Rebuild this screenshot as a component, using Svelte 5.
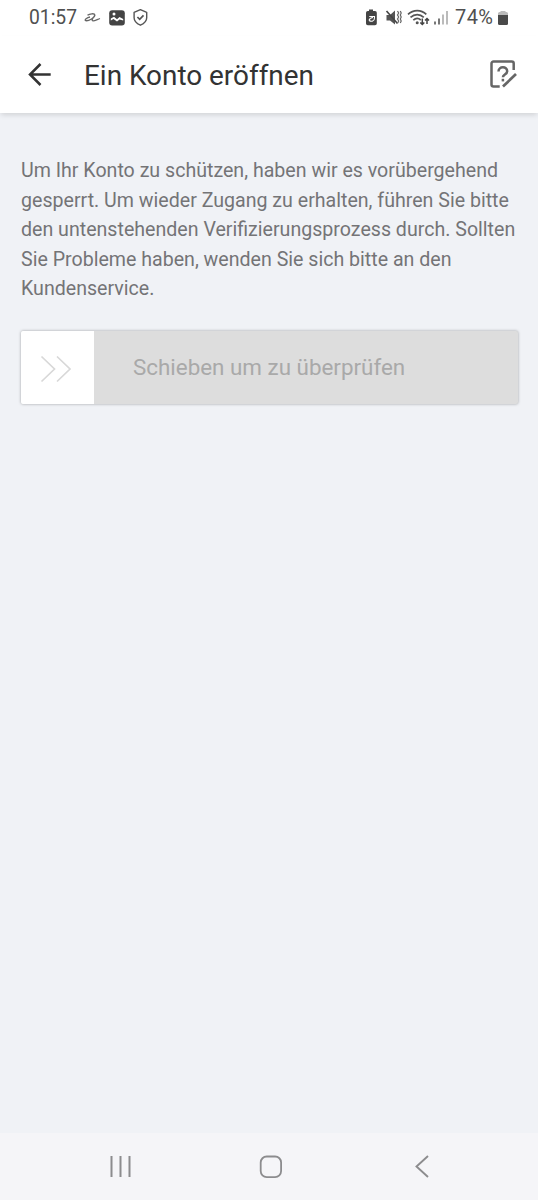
<script>
	const lines = [
		'Um Ihr Konto zu schützen, haben wir es vorübergehend',
		'gesperrt. Um wieder Zugang zu erhalten, führen Sie bitte',
		'den untenstehenden Verifizierungsprozess durch. Sollten',
		'Sie Probleme haben, wenden Sie sich bitte an den',
		'Kundenservice.'
	];
</script>

<div class="screen">
	<div class="status">
		<span class="time">01:57</span>
		<svg class="left-icons" width="70" height="26" viewBox="0 0 70 26" fill="none">
			<path d="M7.5 15.3c2-1.600 7.200-2.300 7.400-.3 0 2.400-6 6.200-9.200 5.700-1.800-.6 1.400-3.300 4.300-3.700M14.900 15c-1.300 2.500-4.200 5.800-1.800 5.800 2 0 4.500-1.600 6.900-2.300" stroke="#666" stroke-width="1.300" />
			<rect x="29.200" y="10.200" width="15.600" height="15.200" rx="3" fill="#444" />
			<path d="M30.800 18.500l3.200-1.800 3 2.500 2.500-2.300 3.700 2.200v1.500l-3.700-1.200-2.500 2.200-3.500-2.700-2.700 1.600z" fill="#fff" />
			<circle cx="34" cy="14" r="1.500" fill="#fff" />
			<path d="M60.400 9.700l6.300 2.600v5.400c0 3.200-2.500 5.700-6.300 7.500-3.800-1.800-6.300-4.300-6.300-7.500v-5.400z" stroke="#555" stroke-width="1.400" stroke-linejoin="round" />
			<path d="M57.400 17l2.300 2.300 3.800-4" stroke="#555" stroke-width="1.700" />
		</svg>
		<svg class="right-icons" width="88" height="28" viewBox="0 0 88 28" fill="none">
			<path d="M8 11V9.500h4V11h2a1.800 1.800 0 0 1 1.800 1.800v10.700a1.800 1.800 0 0 1-1.800 1.800H6.800A1.800 1.800 0 0 1 5 23.500V12.800A1.800 1.800 0 0 1 6.800 11z" fill="#444" />
			<path d="M8.300 16.500h5.200v1.200c0 4-3 4-5.500 2.700M12 17.500c-2 .2-3.500 1-4 2.900" stroke="#fff" stroke-width="1.100" />
			<path d="M25.500 15h3.500l5-4.500v14L29 20.500h-3.500z" fill="#555" />
			<path d="M25.500 11l11 12.500" stroke="#444" stroke-width="1.600" />
			<path d="M36.500 11l1.200 2-1.200 2 1.200 2-1.200 2 1.200 2-1 2M39.300 11l.9 2-.9 2 .9 2-.9 2 .9 2-.9 2" stroke="#666" stroke-width="1.200" />
			<path d="M47 14.300c5.300-5 13.200-5 18.300 0M49.500 17.300c4-3.700 9.400-3.700 13.300 0M52.300 20.200c2.300-2.100 5.300-2.100 7.500-.2" stroke="#555" stroke-width="1.700" />
			<circle cx="56.200" cy="22.700" r="1.500" fill="#555" />
			<path d="M61.300 18.500v6M59.300 22.500l2 2 2-2M66 24v-5M64 20.500l2-2 2 2" stroke="#444" stroke-width="1.500" />
			<path d="M74 21.500v3M78 18.500v6" stroke="#777" stroke-width="2" />
			<path d="M82 14.500v10M86 11v13.500" stroke="#bbb" stroke-width="2" />
		</svg>
		<span class="percent">74%</span>
		<svg class="battery" width="12" height="18" viewBox="0 0 12 18">
			<path d="M3.500 2V1h5v1h1A1.500 1.500 0 0 1 11 3.500V6H1V3.500A1.500 1.500 0 0 1 2.500 2z" fill="#bbb" />
			<path d="M1 5h10v8.500A1.500 1.500 0 0 1 9.500 15h-7A1.500 1.500 0 0 1 1 13.500z" fill="#4a4a4a" />
		</svg>
	</div>

	<header>
		<svg class="back" width="24" height="24" viewBox="0 0 24 24" fill="none" stroke="#333" stroke-width="2.500">
			<path d="M23.700 11.500H3M13.500 1L3 11.500 13.500 22" />
		</svg>
		<h1>Ein Konto eröffnen</h1>
		<svg class="help" width="30" height="32" viewBox="0 0 30 32" fill="none" stroke="#666" stroke-width="2.500">
			<path d="M24.700 11V4.500a2 2 0 0 0-2-2H4.500a2 2 0 0 0-2 2v21a2 2 0 0 0 2 2h6.200" />
			<path d="M14 27.500l13-12.500" stroke-width="2.700" />
			<path d="M9.500 12.500c0-5.500 8.700-5.500 8.700-.3 0 3.300-4.300 3.300-4.300 6" />
			<path d="M13.900 19.800v2.600" />
		</svg>
	</header>

	<main>
		<p>
			{#each lines as line}
				<span>{line}</span>
			{/each}
		</p>

		<div class="slider">
			<div class="handle">
				<svg width="32" height="28" viewBox="0 0 32 28" fill="none" stroke="#d8d8d8" stroke-width="1.700">
					<path d="M1.500 1.500L14.500 14 1.500 26.500M17 1.500L30 14 17 26.500" />
				</svg>
			</div>
			<div class="track">Schieben um zu überprüfen</div>
		</div>
	</main>

	<nav>
		<svg width="24" height="26" viewBox="0 0 24 26" fill="none" stroke="#8c8c8e" stroke-width="2">
			<path d="M3.500 2v21M12.500 2v21M21.500 2v21" />
		</svg>
		<svg width="24" height="26" viewBox="0 0 24 26" fill="none" stroke="#8c8c8e" stroke-width="1.800">
			<rect x="1.700" y="2.500" width="20.400" height="20.600" rx="6" />
		</svg>
		<svg width="24" height="26" viewBox="0 0 24 26" fill="none" stroke="#8c8c8e" stroke-width="1.900">
			<path d="M18 2L6.500 12.500 18 23" />
		</svg>
	</nav>
</div>

<style>
	:global(body) {
		margin: 0;
		background: #f0f2f6;
	}

	.screen {
		display: flex;
		flex-direction: column;
		height: 1200px;
		font-family: Roboto, sans-serif;
		background: #f0f2f6;
	}

	.status {
		display: flex;
		box-sizing: border-box;
		height: 36px;
		padding-left: 29px;
		background: #fff;
		color: #505050;
		font-size: 19.300px;
		line-height: 35px;
		white-space: nowrap;
	}

	.status svg {
		flex: none;
	}

	.time {
		width: 51px;
	}

	.left-icons {
		overflow: visible;
	}

	.right-icons {
		margin-left: 211px;
	}

	.percent {
		width: 42px;
		margin-left: 6px;
		font-size: 20px;
		letter-spacing: 0.4px;
	}

	.battery {
		margin-top: 10px;
	}

	header {
		display: flex;
		align-items: center;
		height: 77px;
		padding: 0 19px 0 27px;
		background: #fff;
		box-shadow: 0 3px 5px -1px rgba(0, 0, 0, 0.13);
	}

	h1 {
		flex: 1;
		margin: 2px 0 0 33px;
		color: #333;
		font-size: 27.900px;
		font-weight: 400;
		line-height: 36px;
	}

	main {
		flex: 1;
		padding: 43px 20px 0 21px;
	}

	p {
		margin: 0;
		color: #747476;
		font-size: 19.600px;
		line-height: 29.500px;
		white-space: nowrap;
	}

	p span {
		display: block;
	}

	.slider {
		display: flex;
		height: 73px;
		margin-top: 27px;
		border-radius: 2px;
		background: #ddd;
		box-shadow: 0 0 3px rgba(0, 0, 0, 0.35);
	}

	.handle {
		display: flex;
		align-items: center;
		justify-content: center;
		width: 73px;
		padding: 4px 4px 0 0;
		box-sizing: border-box;
		border-radius: 2px 0 0 2px;
		background: #fff;
	}

	.track {
		padding-left: 39px;
		color: #a9a9a9;
		font-size: 22.400px;
		line-height: 73px;
	}

	nav {
		display: flex;
		align-items: center;
		justify-content: space-between;
		height: 67px;
		padding: 0 104px 0 108px;
		background: #f5f5f8;
	}
</style>
